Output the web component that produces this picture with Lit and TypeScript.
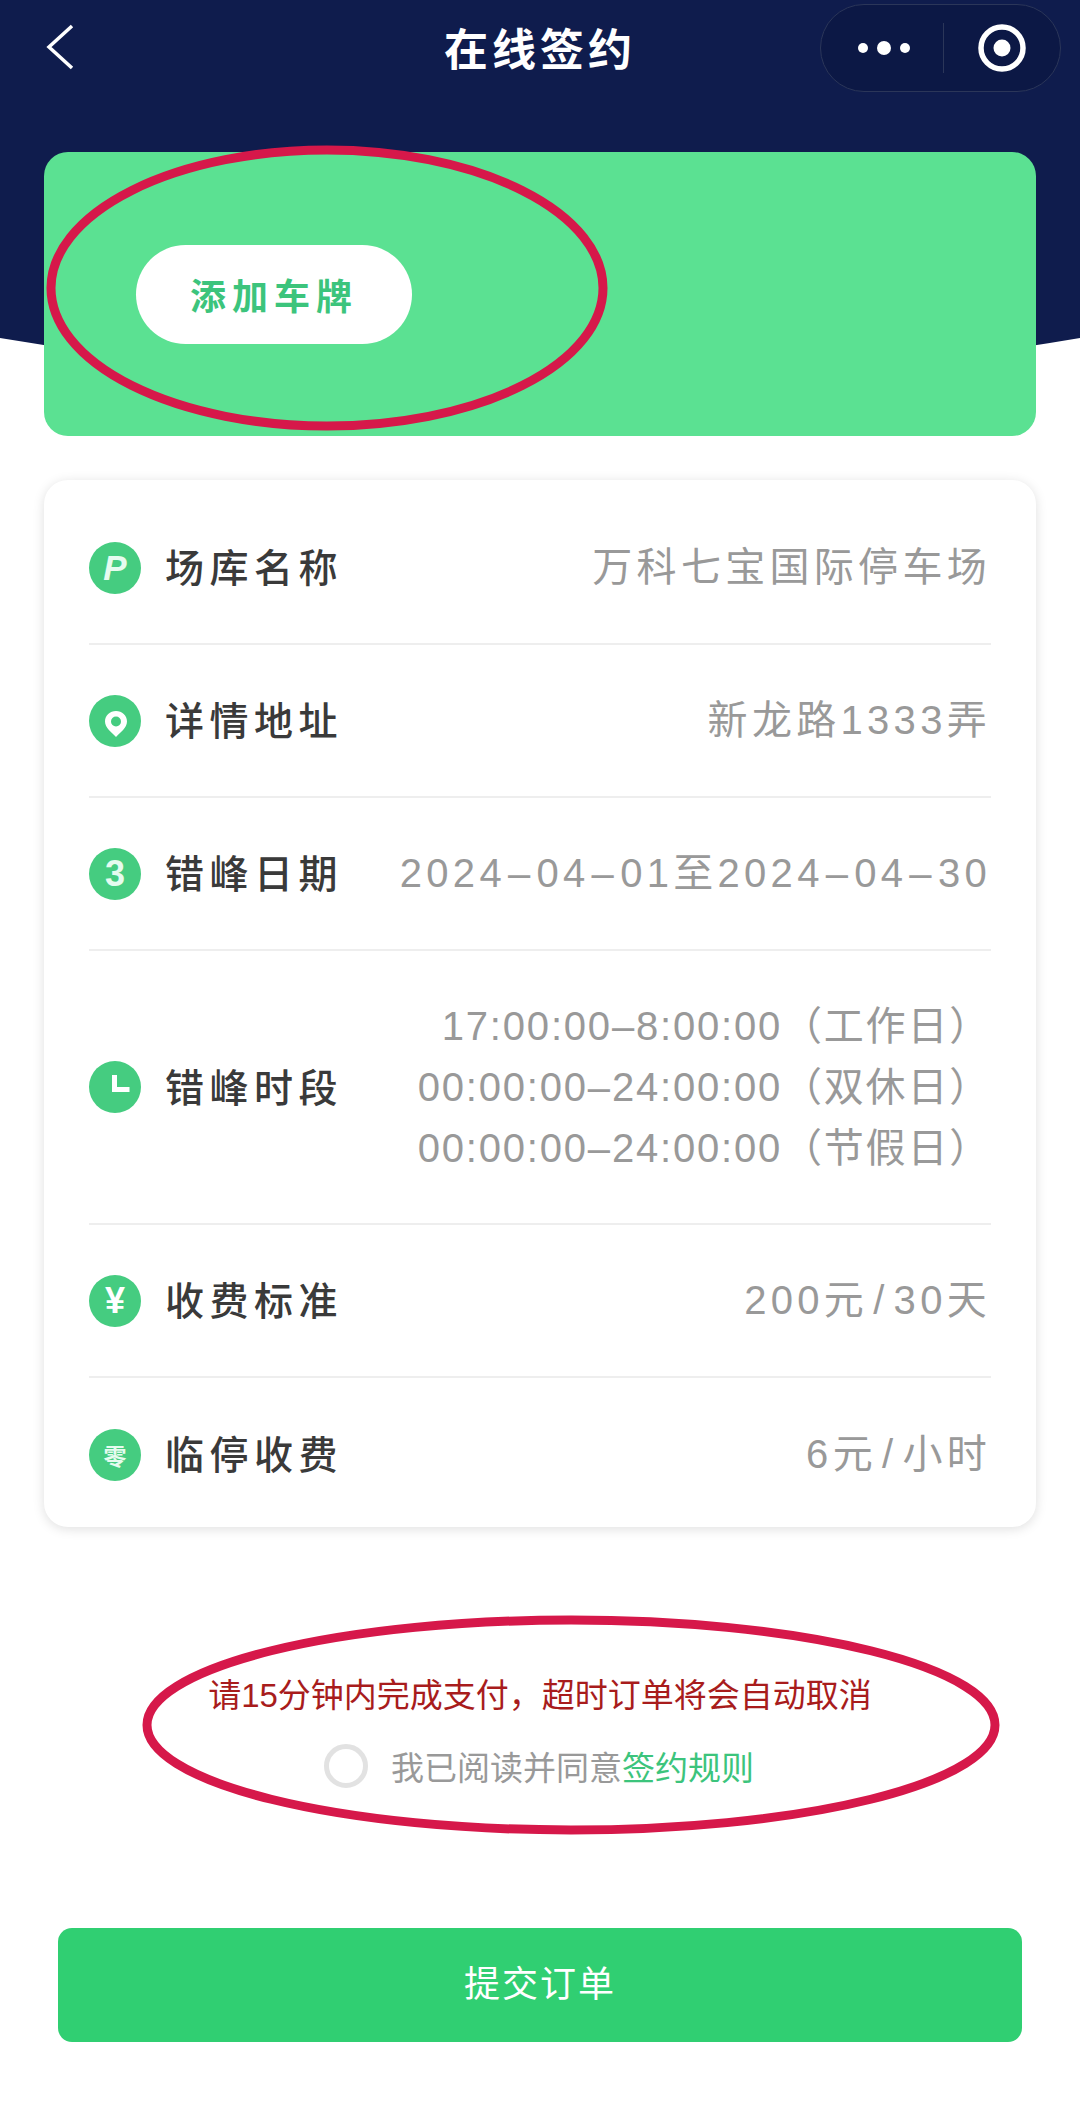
import { LitElement, html, css, svg } from 'lit';
import { customElement } from 'lit/decorators.js';

const icons = {
  pin: svg`<path d="M27 16c-6 0-11 4.6-11 10.4 0 6.4 6.8 10.8 11 15.6 4.2-4.8 11-9.2 11-15.6C38 20.6 33 16 27 16z" fill="#fff"/><circle cx="27" cy="26.5" r="5" fill="#45cc80"/>`,
  clock: svg`<path d="M25.5 14v14.5h15" fill="none" stroke="#fff" stroke-width="5"/>`,
};

const rows = [
  { label: '场库名称', lines: ['万科七宝国际停车场'], glyph: 'P', cls: 'g-p' },
  { label: '详情地址', lines: ['新龙路1333弄'], icon: icons.pin },
  { label: '错峰日期', lines: ['2024–04–01至2024–04–30'], glyph: '3', cls: 'g-3' },
  {
    label: '错峰时段',
    lines: ['17:00:00–8:00:00（工作日）', '00:00:00–24:00:00（双休日）', '00:00:00–24:00:00（节假日）'],
    icon: icons.clock,
  },
  { label: '收费标准', lines: ['200元/30天'], glyph: '¥', cls: 'g-y' },
  { label: '临停收费', lines: ['6元/小时'], glyph: '零', cls: 'g-z' },
];

// dashes and slashes sit wider in the original font
const spaced = (line: string) =>
  line.split(/([–/])/).map((part) => {
    if (part === '–') return html`<span class="dash">${part}</span>`;
    if (part === '/') return html`<span class="slash">${part}</span>`;
    return part;
  });

@customElement('app-root')
export class AppRoot extends LitElement {
  static styles = css`
    :host {
      display: block;
      font-family: 'Liberation Sans', 'Noto Sans CJK SC', sans-serif;
    }
    .page {
      position: relative;
      height: 2115px;
      overflow: hidden;
      background: #fff;
    }
    .hero-bg {
      position: absolute;
      left: 0;
      top: 0;
    }
    .marks {
      position: absolute;
      left: 0;
      top: 0;
      pointer-events: none;
    }
    .content {
      position: relative;
    }
    .nav {
      display: grid;
      grid-template-columns: minmax(0, 1fr) auto minmax(0, 1fr);
      align-items: center;
      height: 100px;
      padding: 0 19px 6px;
      box-sizing: border-box;
    }
    .back {
      margin-left: 27px;
    }
    .title {
      color: #fff;
      font-size: 44px;
      font-weight: 700;
      letter-spacing: 4px;
    }
    .capsule {
      justify-self: end;
      display: flex;
      align-items: center;
      flex: none;
      width: 241px;
      min-width: 241px;
      height: 88px;
      margin-top: 2px;
      box-sizing: border-box;
      border: 1.5px solid #2b3659;
      border-radius: 44px;
      background: #0c1845;
    }
    .capsule .half {
      flex: 1;
      display: flex;
      justify-content: center;
    }
    .capsule .half.dots {
      padding-left: 5px;
    }
    .capsule .sep {
      width: 1px;
      height: 50px;
      background: #2b3659;
    }
    .plate {
      display: flex;
      align-items: center;
      height: 284px;
      margin: 52px 44px 0;
      padding-left: 92px;
      box-sizing: border-box;
      background: #5be192;
      border-radius: 24px;
    }
    .pill {
      display: flex;
      align-items: center;
      justify-content: center;
      width: 276px;
      height: 99px;
      background: #fff;
      border-radius: 50px;
      color: #3cc47c;
      font-size: 36px;
      font-weight: 700;
      letter-spacing: 6px;
    }
    .info {
      margin: 44px 44px 0;
      padding: 12px 45px 0;
      height: 1047px;
      box-sizing: border-box;
      background: #fff;
      border-radius: 24px;
      box-shadow: 0 2px 12px rgba(0, 0, 0, 0.13);
    }
    .row {
      display: flex;
      align-items: center;
      justify-content: space-between;
      height: 153px;
      box-sizing: border-box;
      border-bottom: 2px solid #eeeeee;
    }
    .row:last-child {
      border-bottom: 0;
    }
    .row.tall {
      height: 274px;
    }
    .left {
      display: flex;
      align-items: center;
      gap: 24px;
    }
    .badge {
      display: flex;
      align-items: center;
      justify-content: center;
      width: 52px;
      height: 52px;
      border-radius: 50%;
      background: #45cc80;
      color: #fff;
      flex: none;
    }
    .badge svg {
      display: block;
    }
    .g-p {
      font-size: 35px;
      font-weight: 700;
      font-style: italic;
      color: #e6fbef;
    }
    .g-3 {
      font-size: 36px;
      font-weight: 700;
      color: #e6fbef;
    }
    .g-y {
      font-size: 36px;
      font-weight: 700;
    }
    .g-z {
      font-size: 23px;
      font-weight: 700;
      color: #e6fbef;
    }
    .label {
      color: #3a3a3a;
      font-size: 39px;
      font-weight: 500;
      letter-spacing: 5.5px;
      margin-bottom: 5px;
    }
    .value {
      color: #999999;
      font-size: 40px;
      line-height: 61px;
      letter-spacing: 4.3px;
      text-align: right;
    }
    .dash {
      margin: 0 2px;
    }
    .slash {
      margin: 0 5px;
    }
    .tall .value {
      letter-spacing: 1.8px;
    }
    .tall .dash {
      margin: 0;
    }
    .notice {
      margin-top: 147px;
      text-align: center;
      color: #a81c1c;
      font-size: 33px;
      line-height: 44px;
    }
    .agree {
      display: flex;
      align-items: center;
      margin: 25px 0 0 324px;
      height: 46px;
      color: #999999;
      font-size: 33px;
    }
    .radio {
      width: 44px;
      height: 44px;
      box-sizing: border-box;
      border: 5px solid #e2e2e2;
      border-radius: 50%;
      margin-right: 23px;
    }
    .agree em {
      font-style: normal;
      color: #3cc47c;
    }
    .submit {
      display: flex;
      align-items: center;
      justify-content: center;
      height: 114px;
      margin: 139px 58px 0;
      padding-bottom: 8px;
      box-sizing: border-box;
      background: #30cf72;
      border-radius: 14px;
      color: #fff;
      font-size: 36px;
      letter-spacing: 2px;
    }
  `;

  render() {
    return html`
      <div class="page">
        <svg class="hero-bg" width="1080" height="460" viewBox="0 0 1080 460">
          <path d="M0 0H1080V338Q540 430 0 338Z" fill="#0f1c4d" />
        </svg>
        <div class="content">
          <div class="nav">
            <svg class="back" width="30" height="46" viewBox="0 0 30 46">
              <path d="M26 2 3 23l23 21" fill="none" stroke="#fff" stroke-width="3.5" />
            </svg>
            <div class="title">在线签约</div>
            <div class="capsule">
              <div class="half dots">
                <svg width="54" height="16" viewBox="0 0 54 16">
                  <circle cx="6" cy="8" r="5" fill="#fff" />
                  <circle cx="27" cy="8" r="7" fill="#fff" />
                  <circle cx="48" cy="8" r="5" fill="#fff" />
                </svg>
              </div>
              <div class="sep"></div>
              <div class="half">
                <svg width="50" height="50" viewBox="0 0 50 50">
                  <circle cx="25" cy="25" r="21" fill="none" stroke="#fff" stroke-width="5.5" />
                  <circle cx="25" cy="25" r="8.5" fill="#fff" />
                </svg>
              </div>
            </div>
          </div>
          <div class="plate"><div class="pill">添加车牌</div></div>
          <div class="info">
            ${rows.map(
              (r) => html`
                <div class="row ${r.lines.length > 1 ? 'tall' : ''}">
                  <div class="left">
                    <div class="badge ${r.cls ?? ''}">
                      ${r.icon
                        ? html`<svg width="52" height="52" viewBox="0 0 52 52">${r.icon}</svg>`
                        : r.glyph}
                    </div>
                    <div class="label">${r.label}</div>
                  </div>
                  <div class="value">${r.lines.map((l) => html`<div>${spaced(l)}</div>`)}</div>
                </div>
              `,
            )}
          </div>
          <div class="notice">请15分钟内完成支付，超时订单将会自动取消</div>
          <div class="agree">
            <span class="radio"></span>
            <span>我已阅读并同意<em>签约规则</em></span>
          </div>
          <div class="submit">提交订单</div>
        </div>
        <svg class="marks" width="1080" height="2115" viewBox="0 0 1080 2115">
          <ellipse cx="327" cy="288" rx="276" ry="138" fill="none" stroke="#d6184a" stroke-width="9" />
          <ellipse cx="571" cy="1725" rx="424" ry="105" fill="none" stroke="#d6184a" stroke-width="9" />
        </svg>
      </div>
    `;
  }
}
